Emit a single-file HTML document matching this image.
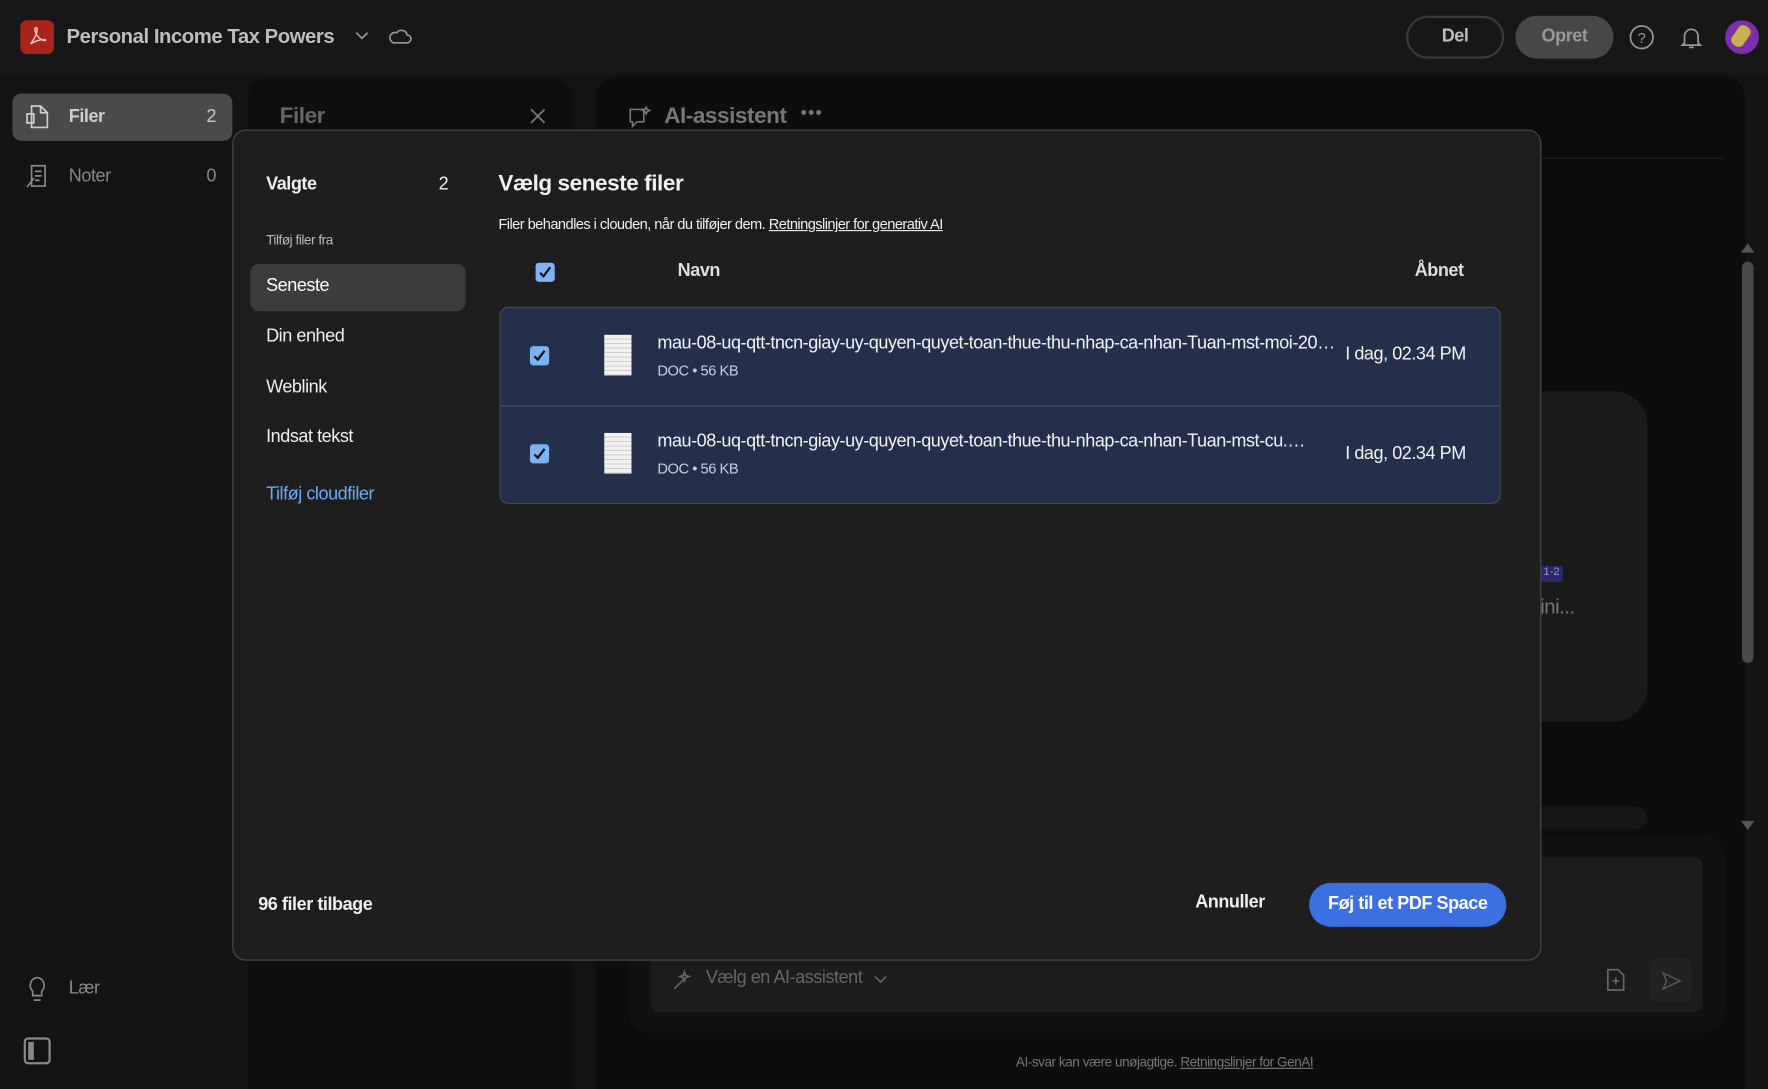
<!DOCTYPE html>
<html><head><meta charset="utf-8"><style>
*{box-sizing:border-box;margin:0;padding:0}
html,body{width:1768px;height:1089px;overflow:hidden;background:#131313}
#w{position:absolute;left:0;top:0;width:1568px;height:966px;transform:scale(1.12755);transform-origin:0 0;font-family:"Liberation Sans",sans-serif;color:#ddd;background:#131313}
.a{position:absolute}
.t{white-space:nowrap;letter-spacing:-0.4px}
.cb{position:absolute;width:17px;height:17px;background:#7fb1f5;border-radius:3px}
.cb svg{position:absolute;left:2px;top:2px}
</style></head><body><div id="w">
<div class="a" style="left:0;top:0;width:1568px;height:66px;background:#171717"></div>
<div class="a" style="left:18px;top:18px;width:30px;height:30px;background:#a8231c;border-radius:6px"></div>
<svg class="a" style="left:22px;top:22px" width="22" height="22" viewBox="0 0 22 22"><path d="M5 17c3-4 6-9 6-13 0-2-2-2-2 0 0 4 4 9 8 10 2 0 2-1 0-1-4 0-9 2-12 4" fill="none" stroke="#f3c4c0" stroke-width="1.3"/></svg>
<div class="a t" style="left:59px;top:22px;font-size:18px;font-weight:bold;color:#bdbdbd">Personal Income Tax Powers</div>
<svg class="a" style="left:314px;top:27px" width="14" height="10"><path d="M2 2l5 5 5-5" stroke="#999" fill="none" stroke-width="1.5"/></svg>
<svg class="a" style="left:344px;top:24px" width="22" height="16"><path d="M5 14h12a3 3 0 0 0 0-7 5 5 0 0 0-9-2 4 4 0 0 0-3 9z" stroke="#999" fill="none" stroke-width="1.4"/></svg>
<div class="a" style="left:1247px;top:14px;width:87px;height:38px;border:2px solid #3a3a3a;border-radius:19px"></div>
<div class="a t" style="left:1247px;top:24px;width:87px;text-align:center;font-size:16px;font-weight:bold;color:#bbb">Del</div>
<div class="a" style="left:1344px;top:14px;width:87px;height:38px;background:#474747;border-radius:19px"></div>
<div class="a t" style="left:1344px;top:24px;width:87px;text-align:center;font-size:16px;font-weight:bold;color:#999">Opret</div>
<svg class="a" style="left:1444px;top:21px" width="24" height="24"><circle cx="12" cy="12" r="10" stroke="#999" fill="none" stroke-width="1.5"/><text x="12" y="17" text-anchor="middle" font-size="13" fill="#999" font-family="Liberation Sans">?</text></svg>
<svg class="a" style="left:1489px;top:21px" width="22" height="24"><path d="M5 17V11a6 6 0 0 1 12 0v6l2 2H3z M9 21h4" stroke="#999" fill="none" stroke-width="1.5"/></svg>
<div class="a" style="left:1530px;top:18px;width:30px;height:30px;border-radius:50%;background:#7b2fa8"></div>
<div class="a" style="left:1538px;top:22px;width:12px;height:20px;border-radius:5px;background:#c8b04a;transform:rotate(35deg)"></div>
<div class="a" style="left:11px;top:83px;width:195px;height:42px;background:#4a4a4a;border-radius:8px"></div>
<svg class="a" style="left:20px;top:91px" width="26" height="26"><path d="M8 3h8l6 6v13H8z M16 3v6h6 M4 10h6v8H4z" stroke="#ccc" fill="none" stroke-width="1.5"/></svg>
<div class="a t" style="left:61px;top:95px;font-size:16px;font-weight:bold;color:#ccc">Filer</div>
<div class="a t" style="left:183px;top:95px;font-size:16px;color:#ccc">2</div>
<svg class="a" style="left:20px;top:144px" width="26" height="26"><path d="M8 3h12v18H8z M11 8h6 M11 12h6 M11 16h4 M4 22l6-8" stroke="#888" fill="none" stroke-width="1.5"/></svg>
<div class="a t" style="left:61px;top:148px;font-size:16px;color:#888">Noter</div>
<div class="a t" style="left:183px;top:148px;font-size:16px;color:#888">0</div>
<svg class="a" style="left:20px;top:864px" width="26" height="28"><path d="M13 3a7 7 0 0 0-4 12v4h8v-4a7 7 0 0 0-4-12z M10 23h6" stroke="#888" fill="none" stroke-width="1.5"/></svg>
<div class="a t" style="left:61px;top:868px;font-size:16px;color:#888">Lær</div>
<svg class="a" style="left:20px;top:919px" width="26" height="26"><rect x="2" y="2" width="22" height="22" rx="3" stroke="#888" fill="none" stroke-width="2"/><rect x="5" y="5" width="5" height="16" fill="#888"/></svg>
<div class="a" style="left:220px;top:68px;width:287px;height:898px;background:#0e0e0e;border-radius:20px 20px 0 0"></div>
<div class="a t" style="left:248px;top:92px;font-size:20px;font-weight:bold;color:#666">Filer</div>
<svg class="a" style="left:469px;top:95px" width="16" height="16"><path d="M2 2l12 12M14 2L2 14" stroke="#777" stroke-width="1.6"/></svg>
<div class="a" style="left:528px;top:68px;width:1020px;height:898px;background:#0d0d0d;border-radius:20px 20px 0 0"></div>
<div class="a t" style="left:589px;top:92px;font-size:20px;font-weight:bold;color:#777">AI-assistent</div>
<div class="a t" style="left:710px;top:92px;font-size:16px;color:#777;letter-spacing:1px">•••</div>
<svg class="a" style="left:556px;top:92px" width="24" height="24"><path d="M3 5h12v11H9l-4 4v-4H3z M17 3l1 2 2 1-2 1-1 2-1-2-2-1 2-1z" stroke="#777" fill="none" stroke-width="1.4"/></svg>
<div class="a" style="left:553px;top:140px;width:977px;height:1px;background:#1e1e1e"></div>
<div class="a" style="left:1300px;top:347px;width:161px;height:293px;background:#1a1a1a;border-radius:30px"></div>
<div class="a" style="left:1366px;top:502px;width:20px;height:14px;background:#2a2a6a;font-size:10px;color:#99c;text-align:center">1-2</div>
<div class="a t" style="left:1366px;top:528px;font-size:18px;color:#777">ini...</div>
<div class="a" style="left:1300px;top:715px;width:161px;height:20px;background:#161616;border-radius:10px"></div>
<div class="a" style="left:1545px;top:232px;width:10px;height:356px;background:#4a4a4a;border-radius:5px"></div>
<div class="a" style="left:1544px;top:216px;width:0;height:0;border:6px solid transparent;border-bottom:8px solid #555;border-top:0"></div>
<div class="a" style="left:1544px;top:728px;width:0;height:0;border:6px solid transparent;border-top:8px solid #555;border-bottom:0"></div>
<div class="a" style="left:557px;top:740px;width:973px;height:176px;background:#111;border-radius:20px"></div>
<div class="a" style="left:577px;top:760px;width:933px;height:138px;background:#1c1c1c;border-radius:8px"></div>
<svg class="a" style="left:595px;top:858px" width="22" height="22"><path d="M3 19l9-9 M12 4l1 3 3 1-3 1-1 3-1-3-3-1 3-1z" stroke="#666" fill="none" stroke-width="1.4"/></svg>
<div class="a t" style="left:626px;top:859px;font-size:16px;color:#666">Vælg en AI-assistent</div>
<svg class="a" style="left:774px;top:864px" width="14" height="10"><path d="M2 2l5 5 5-5" stroke="#666" fill="none" stroke-width="1.5"/></svg>
<svg class="a" style="left:1420px;top:856px" width="24" height="26"><path d="M6 4h9l5 5v13H6z M10 14h6M13 11v6" stroke="#666" fill="none" stroke-width="1.5"/></svg>
<div class="a" style="left:1462px;top:849px;width:38px;height:40px;background:#222;border-radius:8px"></div>
<svg class="a" style="left:1472px;top:860px" width="20" height="20"><path d="M3 3l15 7-15 7 3-7z" stroke="#555" fill="none" stroke-width="1.4"/></svg>
<div class="a t" style="left:901px;top:935px;font-size:12px;color:#777">AI-svar kan være unøjagtige. <u>Retningslinjer for GenAI</u></div>
<div class="a" style="left:206px;top:115px;width:1161px;height:737px;background:#1e1e1e;border:1px solid #4c4c4c;border-radius:12px"></div>
<div class="a t" style="left:236px;top:155px;font-size:16px;font-weight:bold;color:#eee">Valgte</div>
<div class="a t" style="left:389px;top:155px;font-size:16px;color:#eee">2</div>
<div class="a t" style="left:236px;top:206px;font-size:12px;color:#bbb">Tilføj filer fra</div>
<div class="a" style="left:222px;top:234px;width:191px;height:42px;background:#3c3c3c;border-radius:8px"></div>
<div class="a t" style="left:236px;top:245px;font-size:16px;color:#fff">Seneste</div>
<div class="a t" style="left:236px;top:290px;font-size:16px;color:#eee">Din enhed</div>
<div class="a t" style="left:236px;top:335px;font-size:16px;color:#eee">Weblink</div>
<div class="a t" style="left:236px;top:379px;font-size:16px;color:#eee">Indsat tekst</div>
<div class="a t" style="left:236px;top:430px;font-size:16px;color:#6fa9f6">Tilføj cloudfiler</div>
<div class="a t" style="left:442px;top:152px;font-size:20px;font-weight:bold;color:#f0f0f0">Vælg seneste filer</div>
<div class="a t" style="left:442px;top:191px;font-size:13px;color:#eee;letter-spacing:-0.5px">Filer behandles i clouden, når du tilføjer dem. <u>Retningslinjer for generativ AI</u></div>
<div class="cb" style="left:475px;top:233px"><svg width="13" height="13"><path d="M2 7l3 3 6-8" stroke="#111" fill="none" stroke-width="2"/></svg></div>
<div class="a t" style="left:601px;top:232px;font-size:16px;font-weight:bold;color:#ddd">Navn</div>
<div class="a t" style="left:1200px;top:232px;width:98px;text-align:right;font-size:16px;font-weight:bold;color:#ddd">Åbnet</div>
<div class="a" style="left:443px;top:272px;width:888px;height:175px;background:#24304a;border:1px solid #3e4a60;border-radius:8px;overflow:hidden">
 <div class="a" style="left:0;top:86px;width:888px;height:2px;background:#3a4458"></div>
</div>
<div class="cb" style="left:470px;top:307px"><svg width="13" height="13"><path d="M2 7l3 3 6-8" stroke="#111" fill="none" stroke-width="2"/></svg></div>
<div class="cb" style="left:470px;top:394px"><svg width="13" height="13"><path d="M2 7l3 3 6-8" stroke="#111" fill="none" stroke-width="2"/></svg></div>
<div class="a" style="left:536px;top:297px;width:24px;height:36px;background:#f2f2f2;background-image:repeating-linear-gradient(#f2f2f2 0 3px,#cfcfcf 3px 4px)"></div>
<div class="a" style="left:536px;top:384px;width:24px;height:36px;background:#f2f2f2;background-image:repeating-linear-gradient(#f2f2f2 0 3px,#cfcfcf 3px 4px)"></div>
<div class="a t" style="left:583px;top:296px;width:608px;overflow:hidden;text-overflow:ellipsis;font-size:16px;color:#f2f2f2">mau-08-uq-qtt-tncn-giay-uy-quyen-quyet-toan-thue-thu-nhap-ca-nhan-Tuan-mst-moi-2024.doc</div>
<div class="a t" style="left:583px;top:321px;font-size:13px;color:#ccd">DOC • 56 KB</div>
<div class="a t" style="left:583px;top:383px;width:600px;overflow:hidden;text-overflow:ellipsis;font-size:16px;color:#f2f2f2">mau-08-uq-qtt-tncn-giay-uy-quyen-quyet-toan-thue-thu-nhap-ca-nhan-Tuan-mst-cu.…</div>
<div class="a t" style="left:583px;top:408px;font-size:13px;color:#ccd">DOC • 56 KB</div>
<div class="a t" style="left:1190px;top:306px;width:110px;text-align:right;font-size:16px;color:#f2f2f2">I dag, 02.34 PM</div>
<div class="a t" style="left:1190px;top:394px;width:110px;text-align:right;font-size:16px;color:#f2f2f2">I dag, 02.34 PM</div>
<div class="a t" style="left:229px;top:794px;font-size:16px;font-weight:bold;color:#eee">96 filer tilbage</div>
<div class="a t" style="left:1060px;top:792px;font-size:16px;font-weight:bold;color:#eee">Annuller</div>
<div class="a" style="left:1161px;top:783px;width:175px;height:39px;background:#3b6fe2;border-radius:20px"></div>
<div class="a t" style="left:1161px;top:793px;width:175px;text-align:center;font-size:16px;font-weight:bold;color:#fff">Føj til et PDF Space</div>
</div></body></html>
